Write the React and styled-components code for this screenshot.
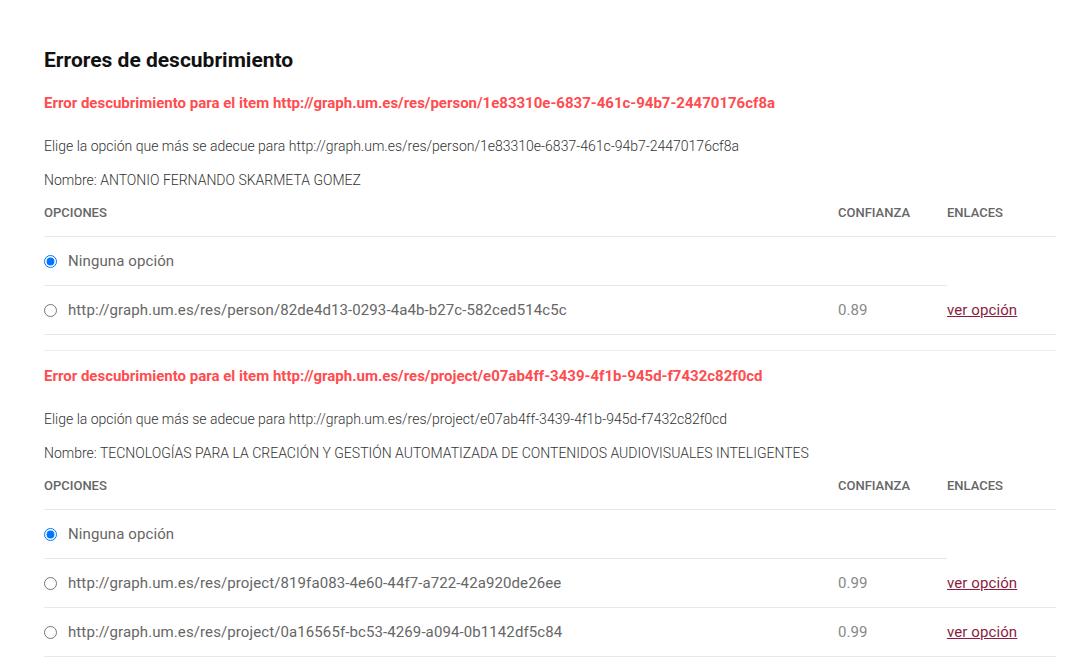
import React from "react";
import styled, { createGlobalStyle } from "styled-components";

const Global = createGlobalStyle`
  html, body { margin: 0; padding: 0; background: #fff; }
  body { font-family: Roboto, "Open Sans", Arial, sans-serif; color: #444; }
`;

const Page = styled.div`
  padding: 46px 32px 0 44px;
  width: 1012px;
`;

const Title = styled.h2`
  margin: 0;
  font-size: 21px;
  line-height: 29px;
  font-weight: 700;
  color: #111;
`;

const Section = styled.section`
  padding-top: ${(p) => (p.$first ? "18px" : "15px")};
  border-top: ${(p) => (p.$first ? "none" : "1px solid #ededed")};
  margin-top: ${(p) => (p.$first ? "0" : "15px")};
`;

const ErrorTitle = styled.h3`
  margin: 0;
  font-size: 15px;
  line-height: 20px;
  font-weight: 700;
  color: #ff4c4f;
`;

const Info = styled.p`
  margin: ${(p) => p.$mt} 0 0;
  font-size: 14px;
  line-height: 18px;
  font-weight: 300;
  color: #333;
`;

const Table = styled.table`
  width: 100%;
  border-collapse: collapse;
  margin-top: 7px;
`;

const Th = styled.th`
  text-align: left;
  font-size: 13px;
  font-weight: 500;
  color: #666;
  padding: 8px 0 14px;
  line-height: 18px;
  border-bottom: 1px solid #e8e8e8;
  width: ${(p) => p.$w || "auto"};
`;

const Td = styled.td`
  padding: 14px 0;
  line-height: 20px;
  font-size: 15px;
  letter-spacing: 0.1px;
  color: ${(p) => p.$color || "#666"};
  border-bottom: 1px solid #e8e8e8;
  vertical-align: middle;
`;

const OptionLabel = styled.label`
  display: flex;
  align-items: center;
  gap: 11px;
  cursor: pointer;
`;

const Radio = styled.input`
  margin: 0;
  width: 13px;
  height: 13px;
`;

const Link = styled.a`
  color: #8c1c3e;
  text-decoration: underline;
  font-size: 15px;
`;

const data = [
  {
    item: "http://graph.um.es/res/person/1e83310e-6837-461c-94b7-24470176cf8a",
    name: "ANTONIO FERNANDO SKARMETA GOMEZ",
    options: [
      { url: "http://graph.um.es/res/person/82de4d13-0293-4a4b-b27c-582ced514c5c", conf: "0.89" },
    ],
  },
  {
    item: "http://graph.um.es/res/project/e07ab4ff-3439-4f1b-945d-f7432c82f0cd",
    name: "TECNOLOGÍAS PARA LA CREACIÓN Y GESTIÓN AUTOMATIZADA DE CONTENIDOS AUDIOVISUALES INTELIGENTES",
    options: [
      { url: "http://graph.um.es/res/project/819fa083-4e60-44f7-a722-42a920de26ee", conf: "0.99" },
      { url: "http://graph.um.es/res/project/0a16565f-bc53-4269-a094-0b1142df5c84", conf: "0.99" },
    ],
  },
];

function ErrorBlock({ entry, idx }) {
  const group = `sel-${idx}`;
  return (
    <Section $first={idx === 0}>
      <ErrorTitle>Error descubrimiento para el item {entry.item}</ErrorTitle>
      <Info $mt="24px">Elige la opción que más se adecue para {entry.item}</Info>
      <Info $mt="16px">Nombre: {entry.name}</Info>
      <Table>
        <thead>
          <tr>
            <Th>OPCIONES</Th>
            <Th $w="109px">CONFIANZA</Th>
            <Th $w="109px">ENLACES</Th>
          </tr>
        </thead>
        <tbody>
          <tr>
            <Td>
              <OptionLabel>
                <Radio type="radio" name={group} defaultChecked />
                Ninguna opción
              </OptionLabel>
            </Td>
            <Td />
          </tr>
          {entry.options.map((o) => (
            <tr key={o.url}>
              <Td>
                <OptionLabel>
                  <Radio type="radio" name={group} />
                  {o.url}
                </OptionLabel>
              </Td>
              <Td $color="#888">{o.conf}</Td>
              <Td>
                <Link href="#">ver opción</Link>
              </Td>
            </tr>
          ))}
        </tbody>
      </Table>
    </Section>
  );
}

export default function App() {
  return (
    <>
      <Global />
      <Page>
        <Title>Errores de descubrimiento</Title>
        {data.map((e, i) => (
          <ErrorBlock key={i} entry={e} idx={i} />
        ))}
      </Page>
    </>
  );
}
